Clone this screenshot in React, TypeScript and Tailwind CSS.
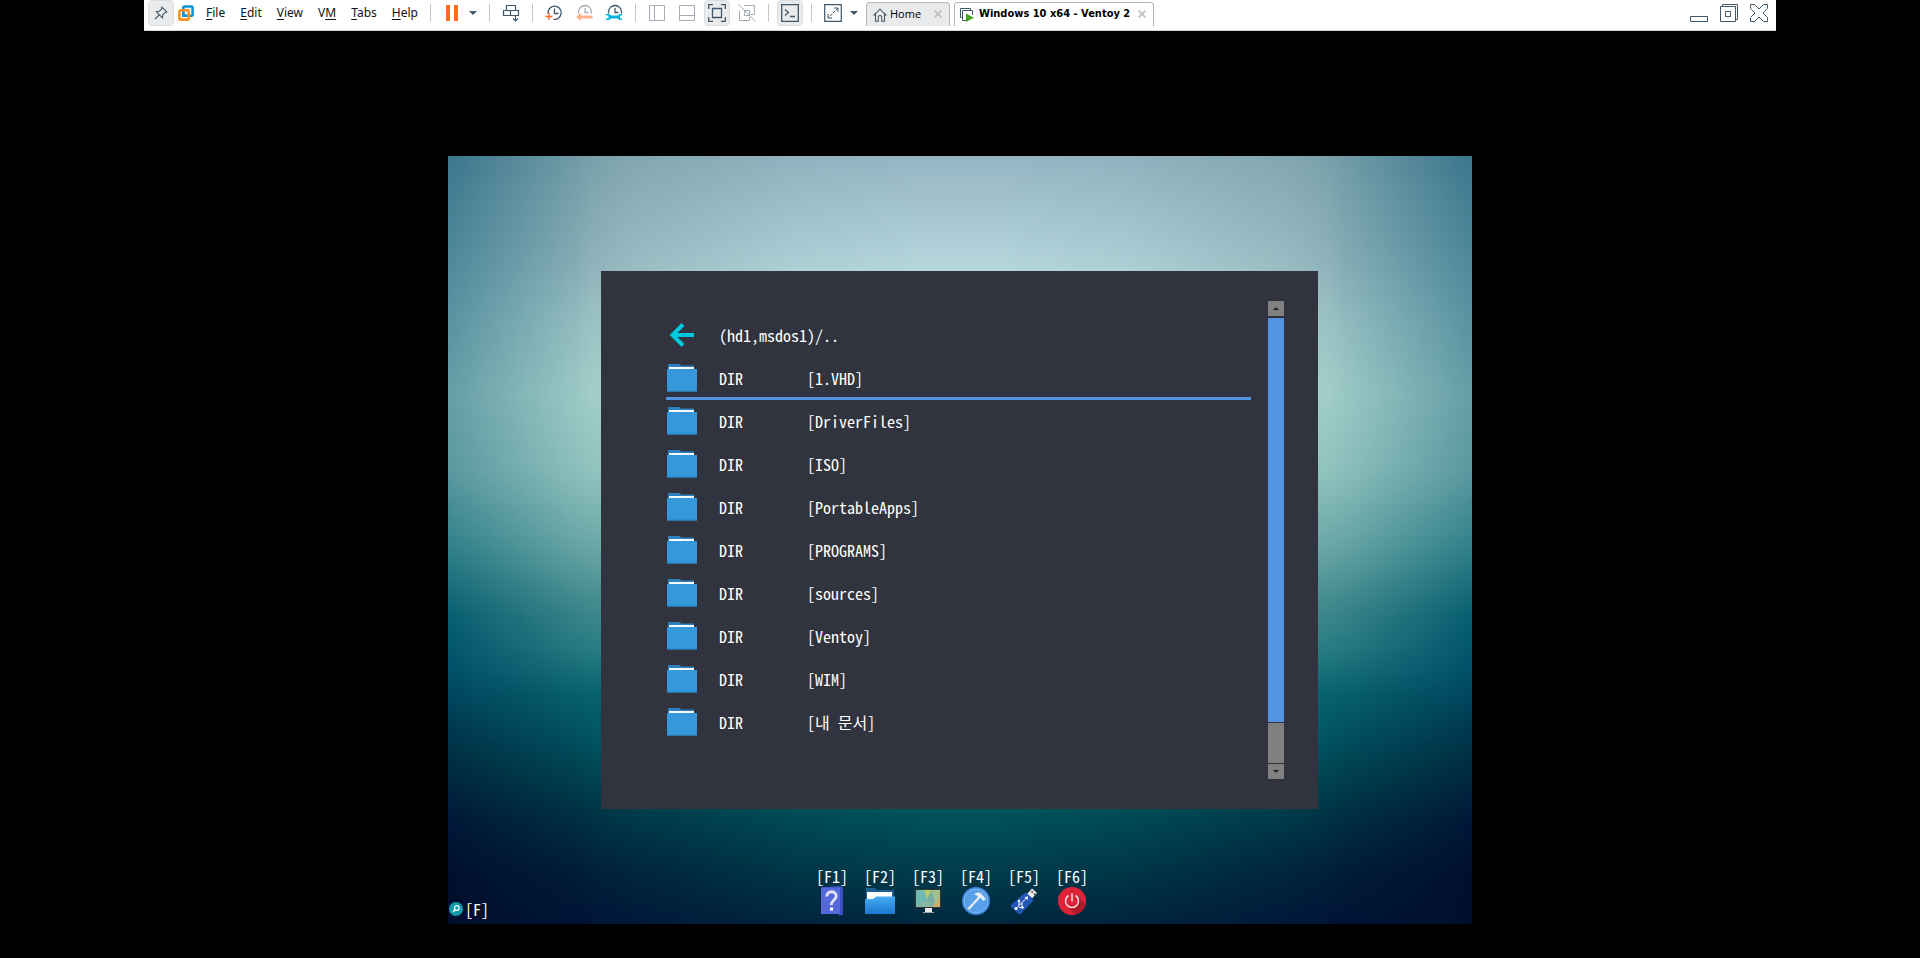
import React from "react";

type IconProps = { children: React.ReactNode; size?: "sm" | "md" };

function Icon({ children, size = "md" }: IconProps) {
  return size === "md" ? (
    <svg viewBox="0 0 18 18" className="h-[18px] w-[18px] shrink-0" fill="none" stroke="#40586a" aria-hidden="true">
      {children}
    </svg>
  ) : (
    <svg viewBox="0 0 14 14" className="h-[14px] w-[14px] shrink-0" fill="none" stroke="#40586a" aria-hidden="true">
      {children}
    </svg>
  );
}

function ToolButton({ label, active, children }: { label: string; active?: boolean; children: React.ReactNode }) {
  return (
    <button
      type="button"
      aria-label={label}
      className={
        active
          ? "flex h-[26px] w-[26px] shrink-0 items-center justify-center rounded-sm border border-[#dcdfe1] bg-[#eaebec]"
          : "flex h-[26px] w-[26px] shrink-0 items-center justify-center"
      }
    >
      {children}
    </button>
  );
}

function Caret({ label }: { label: string }) {
  return (
    <button type="button" aria-label={label} className="flex h-[26px] w-3 shrink-0 items-center">
      <svg viewBox="0 0 8 4" className="h-1 w-2" aria-hidden="true">
        <path d="M0 0h8L4 4z" fill="#40586a" />
      </svg>
    </button>
  );
}

function Separator() {
  return <span className="mx-1 h-[18px] w-px shrink-0 bg-[#c4c8cc]" />;
}

const menus: [string, string, string][] = [
  ["", "F", "ile"],
  ["", "E", "dit"],
  ["", "V", "iew"],
  ["V", "M", ""],
  ["", "T", "abs"],
  ["", "H", "elp"],
];

function CloseMark() {
  return (
    <svg viewBox="0 0 8 8" className="h-2 w-2" aria-hidden="true">
      <path d="M.7.7l6.600 6.600M7.300.7L.7 7.300" stroke="#bfbfbf" strokeWidth="1.700" />
    </svg>
  );
}

function HalfClock({ color }: { color: string }) {
  return (
    <g stroke={color} strokeWidth="1.300">
      <path d="M3.500 9.500V8a6.500 6.500 0 0 1 13 0v1.500" />
      <path d="M10 4v4.500h3.500" />
    </g>
  );
}

function Toolbar() {
  return (
    <header className="flex h-[31px] w-[85%] items-start gap-1 border-b border-[#d9d9d9] bg-white pl-1 text-[#111]">
      <ToolButton label="Pin toolbar" active>
        <Icon size="sm">
          <path d="M1 13l4-4M8 1.200l4.800 4.800-1.600.4-2.400 2.400-.4 3L2.300 5.700l3-.5 2.400-2.300z" strokeWidth="1.100" />
        </Icon>
      </ToolButton>
      <span className="flex h-[26px] items-center">
        <svg viewBox="0 0 16 16" className="h-4 w-4" fill="none" strokeWidth="2.600" aria-hidden="true">
          <rect x="5.300" y="1.500" width="9.300" height="9.200" rx="1.200" stroke="#0d95d4" />
          <rect x="1.400" y="5.200" width="9.300" height="9.400" rx="1.200" stroke="#f7931e" />
          <path d="M5.300 7V10.700H9" stroke="#0d95d4" />
        </svg>
      </span>
      <nav className="flex h-[26px] w-[224px] shrink-0 items-center justify-between pr-1 pl-2 font-['Noto_Sans',sans-serif] text-[12px]">
        {menus.map(([before, key, after]) => (
          <button key={before + key + after} type="button" className="leading-4">
            {before}
            <span className="underline underline-offset-2">{key}</span>
            {after}
          </button>
        ))}
      </nav>
      <div className="flex h-[26px] items-center gap-1">
        <Separator />
        <ToolButton label="Suspend">
          <Icon>
            <path d="M5 1v16M13 1v16" stroke="#ff6a1f" strokeWidth="4" />
          </Icon>
        </ToolButton>
        <Caret label="Power options" />
        <Separator />
        <ToolButton label="Send keys">
          <Icon>
            <path d="M4.500 1.500h9v5h-9zM1.500 6.500h7v5h-7zM8.500 6.500h8v5h-8zM13.500 11v6M11 14.500l2.500 2.500 2.500-2.500" strokeWidth="1.200" />
          </Icon>
        </ToolButton>
        <Separator />
        <ToolButton label="Take snapshot">
          <Icon>
            <path d="M3.100 10A6.600 6.600 0 1 1 8.500 15.300M9.500 4.500v5h4" strokeWidth="1.300" />
            <path d="M.5 12.500h7M4 9v7" stroke="#ff6a1f" strokeWidth="1.300" />
          </Icon>
        </ToolButton>
        <ToolButton label="Revert snapshot">
          <Icon>
            <HalfClock color="#a4adb5" />
            <path d="M1 13l5-4v2.500h11.500v3H6V17z" fill="#ffb08a" stroke="none" />
          </Icon>
        </ToolButton>
        <ToolButton label="Manage snapshots">
          <Icon>
            <HalfClock color="#40586a" />
            <path
              d="M1 10h3l2 1.500h6.500L14.500 10H17v1.500h-2v3h2V16h-2.500l-2-1.500H6L4 16H1v-1.500h2.500v-3H1z"
              fill="#00b4de"
              stroke="none"
            />
          </Icon>
        </ToolButton>
        <Separator />
        <ToolButton label="Show library">
          <Icon>
            <path d="M1.500 1.500h15v15h-15zM6.500 1.500v15" stroke="#a4adb5" />
          </Icon>
        </ToolButton>
        <ToolButton label="Show thumbnails">
          <Icon>
            <path d="M1.500 1.500h15v15h-15zM1.500 11.500h15" stroke="#a4adb5" />
          </Icon>
        </ToolButton>
        <ToolButton label="Full screen" active>
          <Icon>
            <path d="M.7 5V.7H5M13 .7h4.300V5M17.300 13v4.300H13M5 17.300H.7V13" strokeWidth="1.300" />
            <path d="M4.500 4.500h9v9h-9z" strokeWidth="1.300" />
          </Icon>
        </ToolButton>
        <ToolButton label="Unity">
          <Icon>
            <path d="M6 1.500h10.500v9H13M1.500 6.500v10h10V13M6.500 6.500h5v5h-5zM.5.5l17 17" stroke="#a4adb5" />
          </Icon>
        </ToolButton>
        <Separator />
        <ToolButton label="Console view" active>
          <Icon>
            <path d="M.7.7h16.600v16.600H.7z" strokeWidth="1.300" />
            <path d="M4 5.500L7.500 8.500 4 11.500M9 12.500h5" strokeWidth="1.300" />
          </Icon>
        </ToolButton>
        <Separator />
        <ToolButton label="Stretch">
          <Icon>
            <path d="M.7.7h16.600v16.600H.7z" strokeWidth="1.200" />
            <path d="M10 4h4v4M8 14H4v-4" />
            <path d="M14 4L4 14" strokeDasharray="3 1.200" />
          </Icon>
        </ToolButton>
        <Caret label="Stretch options" />
      </div>
      <div className="flex gap-1 pt-[2px] font-['DejaVu_Sans_Condensed','DejaVu_Sans',sans-serif] text-[11px] text-black">
        <div className="flex h-6 w-[84px] items-center rounded-t-sm border border-b-0 border-[#b5b5b5] bg-[#e9eaec] pr-[7px] pl-1.5">
          <Icon size="sm">
            <path d="M.6 7.500L7 1.200l6.400 6.300M2.500 6v7.300h2.800V9.200a1.700 1.700 0 0 1 3.400 0v4.100h2.800V6" strokeWidth="1.100" />
          </Icon>
          <button type="button" className="ml-[3px] flex-1 text-left font-['Open_Sans',sans-serif]">Home</button>
          <button type="button" aria-label="Close Home" className="pb-0.5"><CloseMark /></button>
        </div>
        <div className="flex h-6 w-[200px] items-center rounded-t-sm border border-b-0 border-[#b5b5b5] bg-white pr-[7px] pl-[5px]">
          <Icon size="sm">
            <path d="M2.500 9.500h-2v-9h10v2M6 12.500H2.500v-10h10V7" />
            <path d="M6 5.500l8 4.300L6 14z" fill="#4aa51e" stroke="none" />
          </Icon>
          <button type="button" className="ml-[5px] flex-1 text-left font-bold whitespace-nowrap">Windows 10 x64 - Ventoy 2</button>
          <button type="button" aria-label="Close Windows 10 x64 - Ventoy 2" className="pb-0.5"><CloseMark /></button>
        </div>
      </div>
      <div className="ml-auto flex h-[26px] items-center gap-3 pr-2">
        <button type="button" aria-label="Minimize">
          <Icon><path d="M.5 12.500h17v5H.5z" /></Icon>
        </button>
        <button type="button" aria-label="Restore">
          <Icon><path d="M.5 2.500h15v15H.5zM5.500 7.500h5v5h-5zM2.500 2.500v-2h15v15h-2" /></Icon>
        </button>
        <button type="button" aria-label="Close">
          <Icon><path d="M.5.5h4L9 5l4.500-4.500h4v4L13 9l4.500 4.500v4h-4L9 13l-4.500 4.500h-4v-4L5 9 .5 4.500z" /></Icon>
        </button>
      </div>
    </header>
  );
}

function Folder() {
  return (
    <svg viewBox="0 0 31 28" className="h-7 w-[31px]" aria-hidden="true">
      <path d="M2 0h12l1 1.500h13V6H2z" fill="#2c80bd" />
      <path d="M3 3h25v3H3z" fill="#f4fafc" />
      <path d="M1 5h30v22.500H1z" fill="#3498db" />
      <path d="M1 26.500h30v1H1z" fill="#2785c7" />
    </svg>
  );
}

const directories = ["1.VHD", "DriverFiles", "ISO", "PortableApps", "PROGRAMS", "sources", "Ventoy", "WIM", "내 문서"];

function FileList() {
  return (
    <ul className="min-w-0 flex-1 pt-[13px]">
      <li>
        <button type="button" className="flex h-[43px] w-full items-center pb-0.5 text-left">
          <span className="flex w-[53px] shrink-0">
            <svg viewBox="0 0 31 28" className="h-7 w-[31px]" fill="none" stroke="#00c8de" strokeWidth="4" aria-hidden="true">
              <path d="M17 3.500L6.500 14 17 24.500M6 14h22" />
            </svg>
          </span>
          (hd1,msdos1)/..
        </button>
      </li>
      {directories.map((name, index) => (
        <li key={name}>
          <button
            type="button"
            className={
              index === 0
                ? "flex h-[43px] w-full items-center pb-0.5 text-left shadow-[inset_0_-3px_0_#5294e2]"
                : "flex h-[43px] w-full items-center pb-0.5 text-left"
            }
          >
            <span className="flex w-[53px] shrink-0">
              <Folder />
            </span>
            <span className="w-[88px] shrink-0">DIR</span>
            <span>[{name}]</span>
          </button>
        </li>
      ))}
    </ul>
  );
}

function ScrollBar() {
  return (
    <div className="flex w-4 shrink-0 flex-col">
      <button type="button" aria-label="Scroll up" className="flex h-[15px] items-center justify-center bg-[#808080]">
        <svg viewBox="0 0 6 3" className="h-[3px] w-1.5" aria-hidden="true"><path d="M3 0l3 3H0z" fill="#222" /></svg>
      </button>
      <div className="mt-[2px] flex-1 bg-[#5294e2]" />
      <div className="mt-px h-10 bg-[#808080]" />
      <button type="button" aria-label="Scroll down" className="mt-px flex h-[15px] items-center justify-center bg-[#808080]">
        <svg viewBox="0 0 6 3" className="h-[3px] w-1.5" aria-hidden="true"><path d="M0 0h6L3 3z" fill="#222" /></svg>
      </button>
    </div>
  );
}

const functionKeys: { label: string; title: string; art: React.ReactNode }[] = [
  {
    label: "[F1]",
    title: "Help",
    art: (
      <>
        <path d="M4 1.500L23 0l3 1.500V29l-4 .5V28H4z" fill="#3c50c4" />
        <path d="M4 1.500h19V28H4z" fill="#5468dc" />
        <path d="M9.800 10.500c0-6.500 9.400-6 9.400-.5 0 4-4.900 4.300-4.900 9" fill="none" stroke="#dfe4f8" strokeWidth="2.800" />
        <path d="M13 21.500h3v3h-3z" fill="#fff" />
      </>
    ),
  },
  {
    label: "[F2]",
    title: "Browse",
    art: (
      <>
        <path d="M1 2h9l2 2h17v12H1z" fill="#1d5f8e" />
        <path d="M2 6h25v12H2z" fill="#fff" />
        <path d="M0 13h8l3-2.500h19V28H0z" fill="url(#browse-fill)" />
      </>
    ),
  },
  {
    label: "[F3]",
    title: "Display",
    art: (
      <>
        <path d="M2 3h26v19H2z" fill="#35342f" />
        <path d="M3 4h24v17H3z" fill="#86b8a4" />
        <path d="M3 4h8l3 9-11 8z" fill="#70b8b4" />
        <path d="M11 4h8l-5 9z" fill="#b7cc66" />
        <path d="M19 4h8v7l-8 10-5-8z" fill="#a6c08c" />
        <path d="M19 4l3 11-3 6-5-8z" fill="#78b0a8" />
        <path d="M27 11v10h-8z" fill="#c9b06e" />
        <path d="M12 22h7v4h-7z" fill="#e8e8e8" />
        <path d="M10 26h11v1H10z" fill="#9aa0a3" />
      </>
    ),
  },
  {
    label: "[F4]",
    title: "Tools",
    art: (
      <>
        <circle cx="15" cy="15" r="14" fill="#3c86dc" />
        <circle cx="15" cy="15" r="12" fill="#589fe9" stroke="#82baf3" strokeWidth="1" />
        <path d="M7.500 23L18.500 11" stroke="#e5edf5" strokeWidth="2.400" />
        <path d="M13 8.500c3-2.500 5.500-2.500 7.500-.5l4.500 5-2.500 2-3-3-2-.5-1.500-2z" fill="#e5edf5" />
      </>
    ),
  },
  {
    label: "[F5]",
    title: "USB",
    art: (
      <>
        <path d="M18 8l5-5.500 5 4.500-5 5.500z" fill="#ece9e5" />
        <path d="M22.500 5.200l1.200 1.200M25 7.600l1.200 1.200" stroke="#333" strokeWidth="1.400" />
        <path d="M15 7.500q1.500-1.500 3 0l5.500 5q1.500 1.500 0 3L12 27.500q-1.500 1.500-3 0l-6.500-6q-1.500-1.500 0-3z" fill="#2257b8" />
        <path d="M7 22.500L17.500 12M10 19.500V15.500M13 17v4.500h-3" fill="none" stroke="#fff" strokeWidth="1" />
        <circle cx="7" cy="22.500" r="1.500" fill="#fff" />
        <circle cx="10" cy="15" r="1.200" fill="#fff" />
        <circle cx="13.500" cy="21.500" r="1.200" fill="#fff" />
        <path d="M19 10.500l-.5 3.500-3-3z" fill="#fff" />
      </>
    ),
  },
  {
    label: "[F6]",
    title: "Power",
    art: (
      <>
        <circle cx="15" cy="15" r="14" fill="#dc2338" />
        <path d="M19.500 9.500l9 9A14 14 0 0 1 18 28.700l-8-8.500z" fill="#ae1a2c" />
        <circle cx="15" cy="15" r="6" fill="#dc2338" />
        <path d="M11.500 9.500a6.500 6.500 0 1 0 7 0M15 7.500v8" fill="none" stroke="#f6dde0" strokeWidth="1.500" />
      </>
    ),
  },
];

function Wallpaper() {
  return (
    <div className="absolute inset-0 -z-10 bg-[linear-gradient(to_bottom,#3b768d_0%,#5690a0_19%,#659ea6_31%,#5a98a0_41%,#30808a_51%,#085e70_60%,#005068_67%,#003248_77%,#001737_87%,#000f30_94%,#000f2c_100%)]">
      <div className="absolute inset-0 bg-[linear-gradient(to_bottom,#7da3ac_0%,#92b4bb_14%,#a0c6c6_22%,#a8d2cc_31%,#98c8c2_41%,#72acaa_51%,#4b9092_58%,#2f8186_64%,#0a6670_70%,#00525f_77%,#003746_85%,#00203a_93%,#001538_100%)] [mask-image:linear-gradient(to_right,transparent_0%,rgb(0_0_0/0.450)_7%,rgb(0_0_0/0.900)_14%,black_18%,black_82%,rgb(0_0_0/0.900)_86%,rgb(0_0_0/0.450)_93%,transparent_100%)]" />
      <div className="absolute inset-0 bg-[linear-gradient(to_bottom,#95b5c3_0%,#b5d6dc_15%,#a9d6d2_30%,#006c74_70%,#00545c_85%,#003f4e_92%,#00283f_100%)] [mask-image:linear-gradient(to_right,transparent_12%,rgb(0_0_0/0.350)_22%,rgb(0_0_0/0.800)_34%,black_46%,black_54%,rgb(0_0_0/0.800)_66%,rgb(0_0_0/0.350)_78%,transparent_88%)]" />
    </div>
  );
}

function BootScreen() {
  return (
    <main className="relative isolate mt-[125px] flex aspect-[4/3] w-full max-w-5xl flex-col font-['Noto_Sans_Mono_CJK_KR','DejaVu_Sans_Mono',monospace] text-[16px] leading-5 font-light text-white">
      <Wallpaper />
      <section className="mt-[115px] ml-[153px] flex h-[70%] w-[70%] bg-[#31343f] py-[30px] pr-[34px] pl-[65px]">
        <FileList />
        <div className="flex pl-[17px]">
          <ScrollBar />
        </div>
      </section>
      <footer className="grid flex-1 grid-cols-[1fr_auto_1fr] items-end pb-2">
        <button type="button" className="flex h-[14px] items-center gap-0.5 justify-self-start pl-px">
          <svg viewBox="0 0 14 14" className="h-[14px] w-[14px]" aria-hidden="true">
            <circle cx="7" cy="7" r="7" fill="#1199a8" />
            <circle cx="7.800" cy="6" r="2.300" fill="none" stroke="#fff" strokeWidth="1.200" />
            <path d="M6.200 7.700L4 10" stroke="#fff" strokeWidth="1.400" />
          </svg>
          [F]
        </button>
        <div className="flex pr-4">
          {functionKeys.map((item) => (
            <button key={item.label} type="button" title={item.title} className="flex w-12 flex-col items-center">
              {item.label}
              <svg viewBox="0 0 30 30" className="h-[30px] w-[30px]" aria-hidden="true">
                <defs>
                  <linearGradient id="browse-fill" x1="0" y1="0" x2="0" y2="1">
                    <stop offset="0" stopColor="#48adf3" />
                    <stop offset="1" stopColor="#1a78cf" />
                  </linearGradient>
                </defs>
                {item.art}
              </svg>
            </button>
          ))}
        </div>
        <span />
      </footer>
    </main>
  );
}

export default function App() {
  return (
    <div className="flex min-h-screen flex-col items-center bg-black">
      <Toolbar />
      <BootScreen />
    </div>
  );
}
